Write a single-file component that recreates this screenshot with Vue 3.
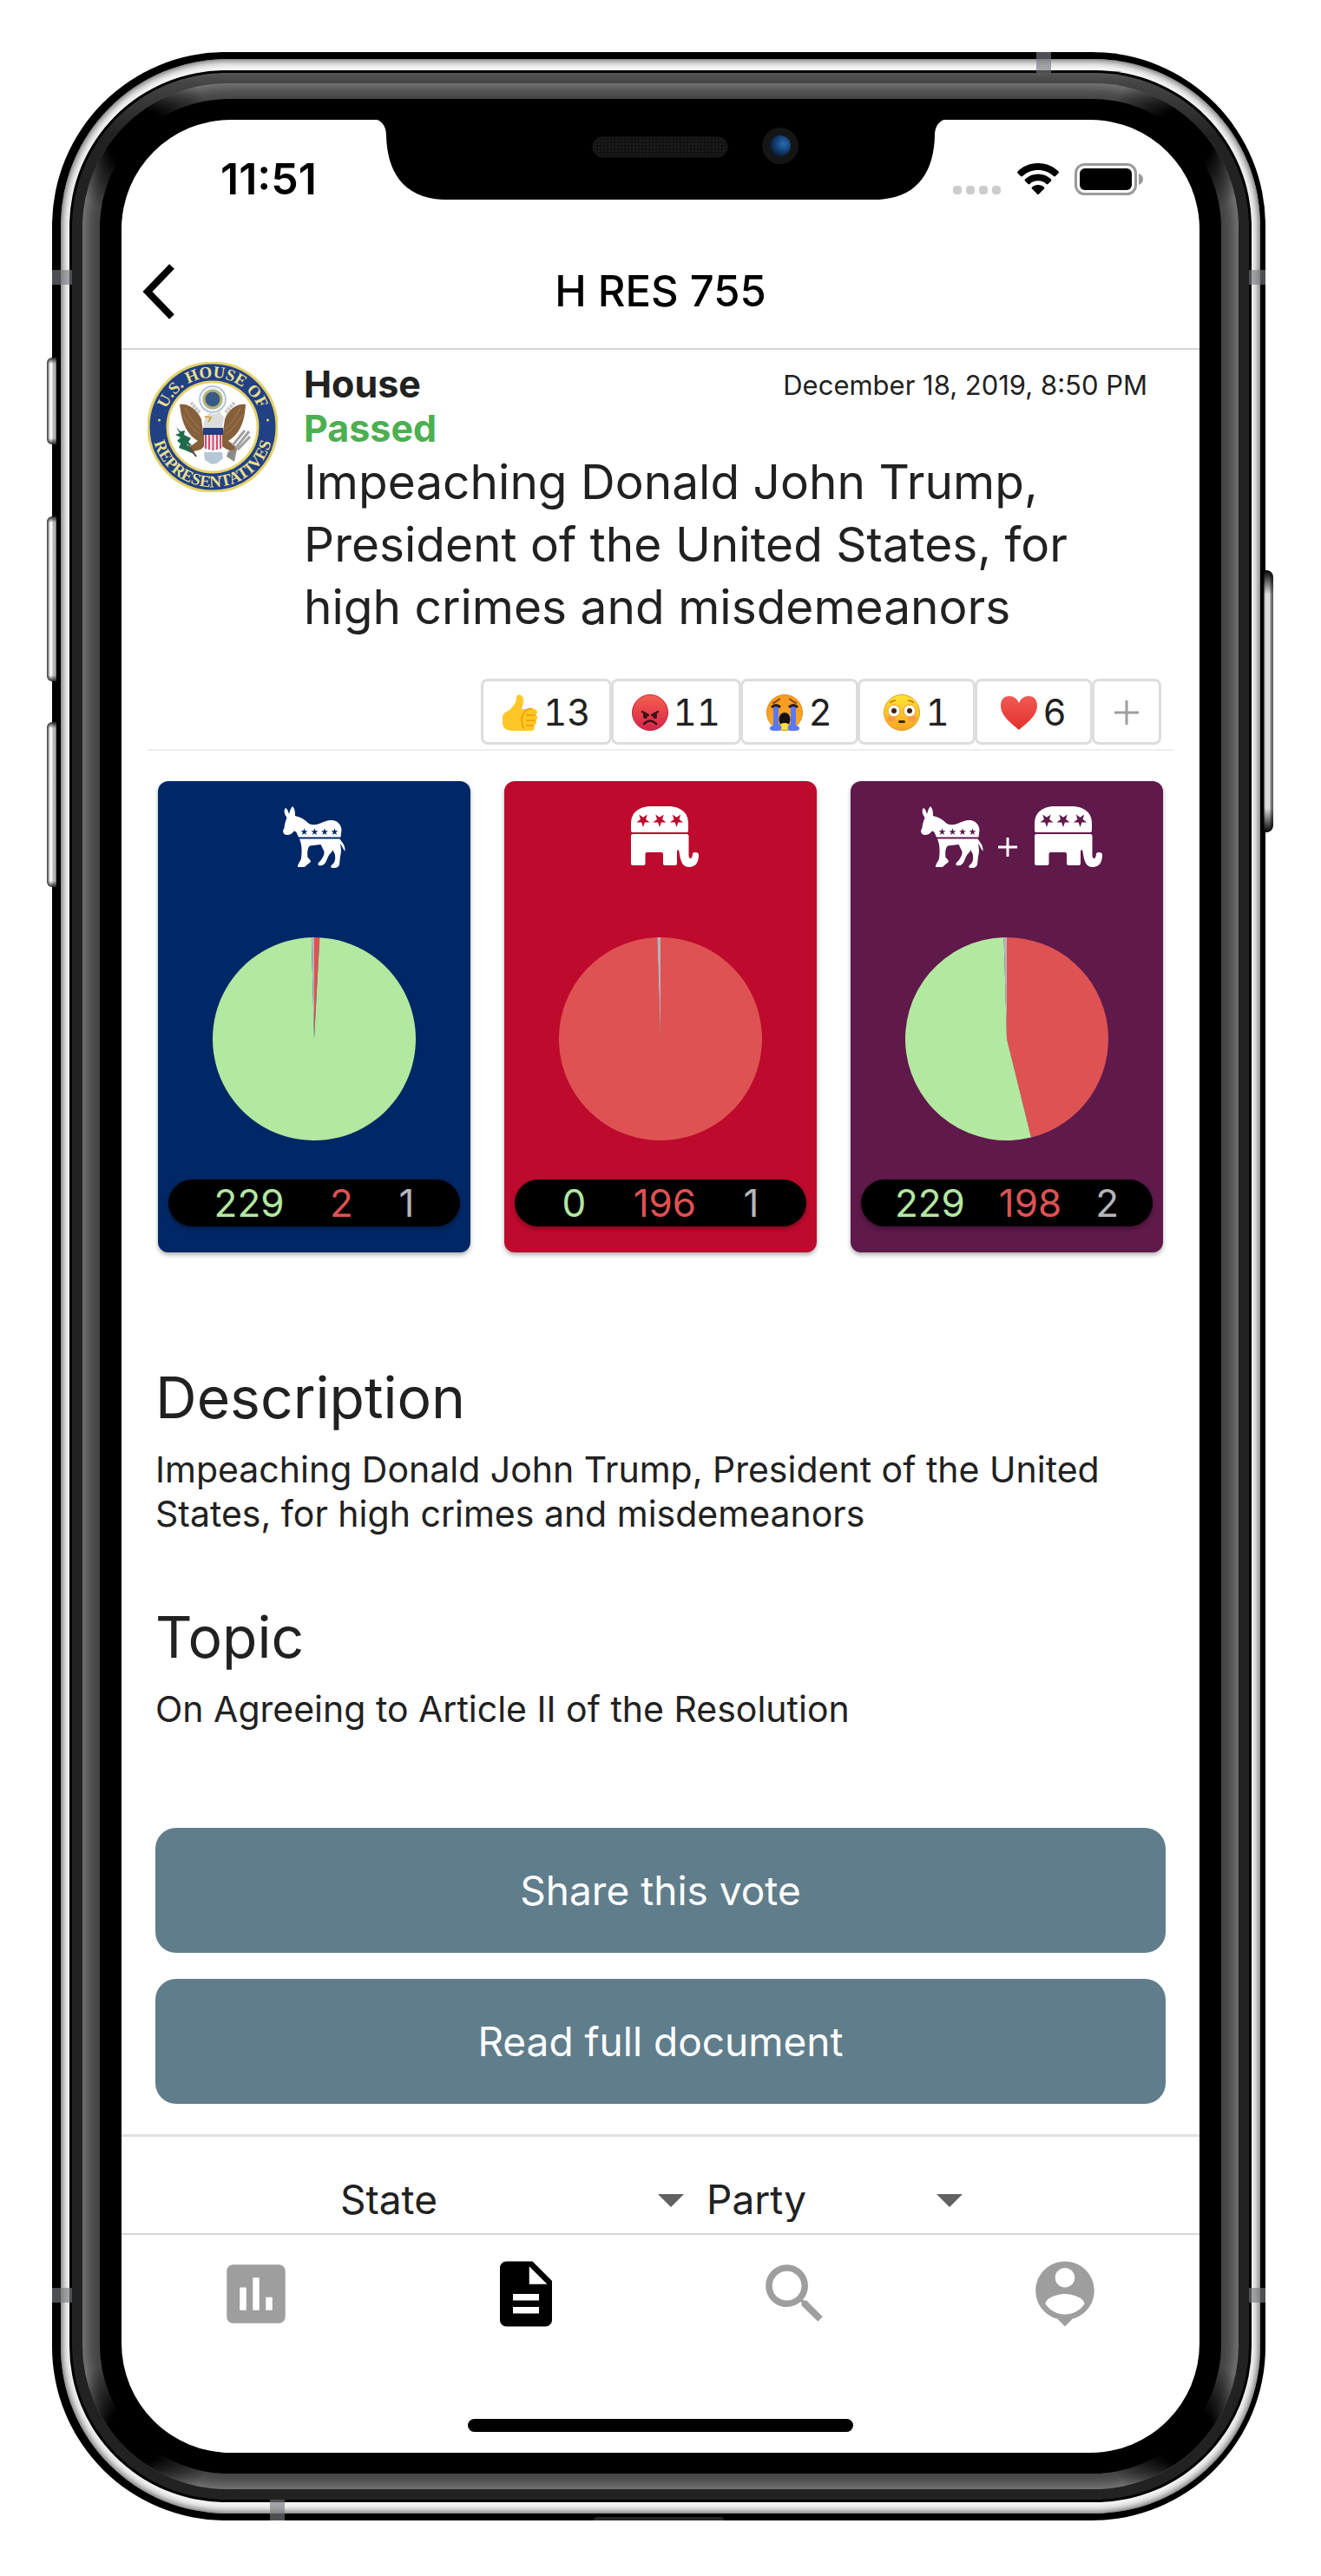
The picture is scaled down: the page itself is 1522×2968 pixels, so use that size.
<script setup>
const star = (cx, cy, r, flip = false) =>
  Array.from({ length: 10 }, (_, i) => {
    const angle = (Math.PI / 5) * i + (flip ? Math.PI / 2 : -Math.PI / 2)
    const len = i % 2 ? r * 0.4 : r
    return `${(cx + len * Math.cos(angle)).toFixed(2)},${(cy + len * Math.sin(angle)).toFixed(2)}`
  }).join(' ')

const donkeyStars = [24.5, 36.5, 48, 59.5].map((x) => star(x, 29.5, 4.2))
const elephantStars = [14, 33, 52.5].map((x) => star(x, 16, 8, true))

const reactions = [
  { kind: 'thumb', label: 'Like', count: 13 },
  { kind: 'angry', label: 'Angry', count: 11 },
  { kind: 'cry', label: 'Crying', count: 2 },
  { kind: 'flushed', label: 'Surprised', count: 1 },
  { kind: 'heart', label: 'Love', count: 6 },
]

const cards = [
  { tone: 'blue', label: 'Democrats', icons: ['donkey'], yes: 229, no: 2, other: 1 },
  { tone: 'red', label: 'Republicans', icons: ['elephant'], yes: 0, no: 196, other: 1 },
  { tone: 'purple', label: 'All members', icons: ['donkey', 'elephant'], yes: 229, no: 198, other: 2 },
]

// Clockwise from twelve o'clock: no, yes, other.
function slices({ no, yes, other }) {
  const total = no + yes + other
  let from = 0
  return [['no', no], ['yes', yes], ['other', other]]
    .filter(([, n]) => n > 0)
    .map(([name, n]) => {
      const to = from + n / total
      const point = (t) =>
        `${(50 + 50 * Math.sin(2 * Math.PI * t)).toFixed(3)} ${(50 - 50 * Math.cos(2 * Math.PI * t)).toFixed(3)}`
      const d = `M50 50L${point(from)}A50 50 0 ${n / total > 0.5 ? 1 : 0} 1 ${point(to)}Z`
      from = to
      return { name, d }
    })
}

const tabs = [
  { label: 'Stats', d: 'M17 17H15V13H17V17M13 17H11V7H13V17M9 17H7V10H9V17M19 3H5C3.89 3 3 3.89 3 5V19C3 20.1 3.9 21 5 21H19C20.1 21 21 20.1 21 19V5C21 3.9 20.1 3 19 3Z' },
  { label: 'Votes', active: true, d: 'M14 2H6c-1.1 0-2 .9-2 2v16c0 1.1.9 2 2 2h12c1.1 0 2-.9 2-2V8l-6-6zm2 16H8v-2h8v2zm0-4H8v-2h8v2zm-3-5V3.5L18.5 9H13z' },
  { label: 'Search', d: 'M15.5 14h-.79l-.28-.27C15.41 12.59 16 11.11 16 9.5 16 5.91 13.09 3 9.5 3S3 5.91 3 9.5 5.91 16 9.5 16c1.61 0 3.09-.59 4.23-1.57l.27.28v.79l5 4.99L20.49 19l-4.99-5zm-6 0C7.01 14 5 11.99 5 9.5S7.01 5 9.5 5 14 7.01 14 9.5 11.99 14 9.5 14z' },
  { label: 'Account', d: 'M12 2c-4.97 0-9 4.03-9 9 0 4.17 2.84 7.67 6.69 8.69L12 22l2.31-2.31C18.16 18.67 21 15.17 21 11c0-4.97-4.03-9-9-9zm0 2c1.66 0 3 1.34 3 3s-1.34 3-3 3-3-1.34-3-3 1.34-3 3-3zm0 14.3c-2.5 0-4.71-1.28-6-3.22.03-1.99 4-3.08 6-3.08 1.99 0 5.97 1.09 6 3.08-1.29 1.94-3.5 3.22-6 3.22z' },
]
</script>

<template>
  <div class="stage">
    <div class="phone">
      <i class="key key-mute"></i>
      <i class="key key-up"></i>
      <i class="key key-down"></i>
      <i class="key key-power"></i>
      <div class="steel">
        <div class="seam">
          <div class="bezel">
            <div class="glow">
              <div class="glass">
                <div class="screen">
                  <svg class="notch" viewBox="0 0 664 93" aria-hidden="true">
                    <defs>
                      <radialGradient id="lens" cx="0.65" cy="0.4" r="0.7">
                        <stop offset="0" stop-color="#2a6db0" />
                        <stop offset="0.45" stop-color="#17467f" />
                        <stop offset="1" stop-color="#081530" />
                      </radialGradient>
                      <pattern id="mesh" width="4" height="4" patternUnits="userSpaceOnUse">
                        <rect width="4" height="4" fill="#121212" />
                        <rect width="2" height="2" fill="#1e1e1e" />
                      </pattern>
                    </defs>
                    <path d="M0 0C9 0 16 7 16 19C17 60 35 93 86 93H578C629 93 647 60 648 19C648 7 655 0 664 0Z" />
                    <rect x="254" y="21" width="155" height="23" rx="11" fill="url(#mesh)" stroke="#1c1c1c" />
                    <circle cx="470" cy="31" r="21" fill="#151515" />
                    <circle cx="470" cy="31" r="12" fill="url(#lens)" />
                  </svg>

                  <div class="status">
                    <time class="clock">11:51</time>
                    <div class="signals">
                      <svg width="56" height="37" viewBox="0 0 56 37" aria-hidden="true">
                        <g fill="#ccc">
                          <rect v-for="n in 4" :key="n" :x="(n - 1) * 15" y="26" width="10" height="10" rx="4" />
                        </g>
                      </svg>
                      <svg width="48" height="37" viewBox="0 0 48 37" aria-hidden="true">
                        <path d="M24 0C34 0 42 4 47.500 9.500C48 10 48 11 47.500 11.500L44 15C43.500 15.500 42.500 15.500 42 15C37 10.500 31 8 24 8S11 10.500 6 15C5.500 15.500 4.500 15.500 4 15L.5 11.500C0 11 0 10 .5 9.500C6 4 14 0 24 0Z" />
                        <path d="M24 12.500C30 12.500 35 14.500 39 18.500C39.500 19 39.500 20 39 20.500L35.500 24C35 24.500 34 24.500 33.500 24C31 21.500 28 20.300 24 20.300S17 21.500 14.500 24C14 24.500 13 24.500 12.500 24L9 20.500C8.500 20 8.500 19 9 18.500C13 14.500 18 12.500 24 12.500Z" />
                        <path d="M24 25C27 25 29 26 31 27.700C31.500 28.200 31.500 29 31 29.500L24.800 35.800C24.300 36.300 23.700 36.300 23.200 35.800L17 29.500C16.500 29 16.500 28.200 17 27.700C19 26 21 25 24 25Z" />
                      </svg>
                      <svg width="80" height="37" viewBox="0 0 80 37" aria-hidden="true">
                        <rect x="1.500" y="1.500" width="69" height="34" rx="10" fill="none" stroke="#9a9a9a" stroke-width="3" />
                        <rect x="6" y="6" width="60" height="25" rx="6" />
                        <path d="M74 12C77 13 79 15 79 18.500S77 24 74 25Z" fill="#9a9a9a" />
                      </svg>
                    </div>
                  </div>

                  <header class="navbar">
                    <button class="back" type="button" aria-label="Back">
                      <svg width="38" height="64" viewBox="0 0 38 64" fill="none" stroke="#000" stroke-width="8">
                        <path d="M34 3L6 32L34 61" />
                      </svg>
                    </button>
                    <h1>H RES 755</h1>
                  </header>

                  <main>
                    <article class="bill">
                      <svg class="seal" viewBox="0 0 150 150" role="img" aria-label="Seal of the House">
                        <defs>
                          <path id="seal-top" d="M18 75A57 57 0 0 1 132 75" />
                          <path id="seal-bottom" d="M5.500 66A70 70 0 1 0 144.500 66" />
                        </defs>
                        <circle cx="75" cy="75" r="74" fill="#214184" stroke="#e5d36a" stroke-width="3" />
                        <circle cx="75" cy="75" r="52" fill="#fff" stroke="#e5d36a" stroke-width="3" />
                        <g class="seal-text">
                          <text><textPath href="#seal-top" startOffset="50%">U.S. HOUSE OF</textPath></text>
                          <text><textPath href="#seal-bottom" startOffset="50%">REPRESENTATIVES</textPath></text>
                        </g>
                        <circle cx="13.500" cy="67" r="1.500" fill="#e5d36a" />
                        <circle cx="138.500" cy="67" r="1.500" fill="#e5d36a" />
                        <circle cx="75" cy="43" r="15" fill="#eef3f6" stroke="#a9bdcb" stroke-width="1.500" />
                        <circle cx="75" cy="43" r="10" fill="#375a86" stroke="#b6b178" stroke-width="3" />
                        <path d="M50 47L60 58M100 47L90 58" stroke="#c5c5c5" stroke-width="4" stroke-dasharray="3 1" />
                        <path d="M37 49C46 47 57 54 62 66L64 80H87L89 66C93 54 104 47 113 49C112 66 108 82 93 91L104 99L101 105L90 100L84 96H67L61 101L50 104L47 99L58 91C43 82 39 66 37 49Z" fill="#86603b" />
                        <path d="M43 53C48 63 55 72 61 77M41 61C46 71 53 78 60 83M107 53C102 63 96 72 89 77M109 61C104 71 97 78 90 83" fill="none" stroke="#a07d58" stroke-width="1" />
                        <path d="M66 65L71 59L78 60L83 57L88 64L86 77H64Z" fill="#dcdcdc" />
                        <path d="M66 63L73 64L70 69" fill="none" stroke="#c8a942" stroke-width="2" />
                        <path d="M65 77H86V99Q75 105 65 99Z" fill="#f0e8ec" />
                        <path d="M67 84V100M71 84V101M75.500 84V102M80 84V101M84 84V100" stroke="#d9486d" stroke-width="2" />
                        <rect x="64" y="76" width="23" height="8" fill="#243c82" />
                        <path d="M33 75L38 80L43 79L42 84L50 88L47 92L52 97L45 95L53 106L44 102L36 99L38 94L34 91L38 87L32 84L37 82Z" fill="#1f6b4b" />
                        <path d="M47 96L56 109" stroke="#54483a" stroke-width="2" />
                        <path d="M101 100L117 80M98 96L112 79M104 101L118 86" stroke="#a0a0a0" stroke-width="3" />
                        <path d="M93 103L103 100L100 115L91 109Z" fill="#8c8c86" />
                        <path d="M65 104H86L87 111L80 117L74 118L66 113Z" fill="#b6c8d6" />
                      </svg>
                      <div class="bill-text">
                        <div class="bill-head">
                          <strong>House</strong>
                          <time class="date">December 18, 2019, 8:50 PM</time>
                        </div>
                        <strong class="passed">Passed</strong>
                        <h2>Impeaching Donald John Trump, President of the United States, for high crimes and misdemeanors</h2>
                      </div>
                    </article>

                    <div class="reactions">
                      <button v-for="r in reactions" :key="r.kind" class="reaction" type="button" :aria-label="r.label">
                        <svg class="emoji" viewBox="0 0 42 42" aria-hidden="true">
                          <defs>
                            <linearGradient :id="'fill-' + r.kind" x1="0" y1="0" x2="0" y2="1">
                              <stop class="stop-a" :class="r.kind" offset="0" />
                              <stop class="stop-b" :class="r.kind" offset="1" />
                            </linearGradient>
                          </defs>
                          <template v-if="r.kind === 'thumb'">
                            <path d="M1 27C1 21 5 21 9 18C13 14 17 10 17 4C17 0 20 0 22 1C27 4 25 11 23 17H36C42 17 42 22 39 24C42 25 42 29 39 30C41 32 40 35 37 36C39 38 38 42 34 42H13C4 42 1 38 1 32Z" fill="#ffc726" />
                            <path d="M39 24H28M39 30H28M37 36H28M26 40C22 34 22 26 26 21C28 17 32 16 36 17" fill="none" stroke="#ef9c00" stroke-width="1.500" />
                          </template>
                          <template v-else-if="r.kind === 'angry'">
                            <circle cx="21" cy="21" r="20.500" fill="url(#fill-angry)" stroke="#c9233f" />
                            <path d="M12 20L19 24M30 20L23 24" stroke="#3b1116" stroke-width="2.500" stroke-linecap="round" />
                            <ellipse cx="15.500" cy="24.500" rx="2.500" ry="3.500" fill="#3b1116" />
                            <ellipse cx="26.500" cy="24.500" rx="2.500" ry="3.500" fill="#3b1116" />
                            <path d="M14 34Q21 27 28 34" fill="none" stroke="#3b1116" stroke-width="2.500" stroke-linecap="round" />
                          </template>
                          <template v-else-if="r.kind === 'cry'">
                            <circle cx="21" cy="21" r="20.500" fill="url(#fill-cry)" stroke="#e58a10" />
                            <path d="M8 10Q12 8 15 5.500M34 10Q30 8 27 5.500" fill="none" stroke="#80481b" stroke-width="2" stroke-linecap="round" />
                            <ellipse cx="21" cy="29" rx="6.500" ry="8" fill="#171113" />
                            <ellipse cx="21" cy="37" rx="6" ry="4" fill="#ffe23a" />
                            <path d="M8 14H14V34C19 36 18 42 14 42H8C3 42 2 37 8 36ZM34 14H28V34C23 36 24 42 28 42H34C39 42 40 37 34 36Z" fill="#5b78fb" />
                            <path d="M6 15Q11 10 16 15M36 15Q31 10 26 15" fill="none" stroke="#2c1a18" stroke-width="3" />
                          </template>
                          <template v-else-if="r.kind === 'flushed'">
                            <circle cx="21" cy="21" r="20.500" fill="url(#fill-flushed)" stroke="#e79a16" />
                            <ellipse cx="9" cy="28" rx="5" ry="3.500" fill="#f78b4e" opacity=".7" />
                            <ellipse cx="33" cy="28" rx="5" ry="3.500" fill="#f78b4e" opacity=".7" />
                            <circle cx="12" cy="19" r="7" fill="#fff" stroke="#e79a16" />
                            <circle cx="30" cy="19" r="7" fill="#fff" stroke="#e79a16" />
                            <circle cx="12" cy="19" r="3" fill="#3b2414" />
                            <circle cx="30" cy="19" r="3" fill="#3b2414" />
                            <path d="M7 10Q10 7 14 7M35 10Q32 7 28 7" fill="none" stroke="#c77a10" stroke-width="1.500" />
                            <rect x="17" y="30" width="8" height="3" rx="1.500" fill="#3b2414" />
                          </template>
                          <path v-else d="M21 41C12 33 0 25 0 13C0 5 5 2 10 2C15 2 19 5 21 10C23 5 27 2 32 2C37 2 42 5 42 13C42 25 30 33 21 41Z" fill="url(#fill-heart)" />
                        </svg>
                        <span>{{ r.count }}</span>
                      </button>
                      <button class="reaction add" type="button" aria-label="Add reaction">
                        <svg width="28" height="28" viewBox="0 0 28 28" stroke="#9e9e9e" stroke-width="3">
                          <path d="M0 14H28M14 0V28" />
                        </svg>
                      </button>
                    </div>

                    <div class="cards">
                      <section v-for="card in cards" :key="card.tone" class="card" :class="card.tone" :aria-label="card.label">
                        <div class="party">
                          <template v-for="(icon, i) in card.icons" :key="icon">
                            <svg v-if="i" class="plus" width="22" height="22" viewBox="0 0 22 22" stroke="#fff" stroke-width="3">
                              <path d="M0 11H22M11 0V22" />
                            </svg>
                            <svg v-if="icon === 'donkey'" width="72" height="72" viewBox="0 0 72 72" fill="#fff">
                              <path d="M4.500 13C1 8 1 4 3 2C5.500 3 6 6 7 9C8 5 9 2 11 0C14 3 14 7 14 11C20 12 25 15 30 20C34 22 38 21.500 42 20C47 18 51 16 56 16C63 16.500 67 21 67.500 27L66.500 35.500H18L15.500 30Q13 27 11.500 30Q9 33.500 5 33Q0 33 0 28Q2 25 2 21Q3 17 4.500 13Z" />
                              <path d="M19 37.500H65.500C68 42 72 44 71.500 52C69 49 68 45 66 43C67 48 67.500 53 66 58L65 67Q64 71 59 71H56Q54 69 57 67Q61 64 60 56C59 52 56 50 56 46C58 50 57 52 55 54C51 57 51 64 47 67Q45 69 41 68Q39 66 43 63Q48 57 47.500 52C46 49 45 47 43.500 44L31 45.500C28 48 28 54 28.500 59C30 60 32 62 32 64L27 68Q26 70 24 70H17C17 66 20 64 21 60C22 52 22 45 19 37.500Z" />
                              <polygon v-for="(points, n) in donkeyStars" :key="n" class="cutout" :points="points" />
                            </svg>
                            <svg v-else width="78" height="70" viewBox="0 0 78 70" fill="#fff">
                              <path d="M0 28V20C0 7 9 0 24 0H42C57 0 66 7 66 20V28Q66 30 64 30H2Q0 30 0 28Z" />
                              <path d="M2 32H64Q66.500 32 66.500 34V56Q66.500 60 68.500 60Q70.500 60 71 55Q71 53 74 53Q78 53 78 56C78 65 74 70 67 70C59 70 57 63 55.500 52Q54 48 53 52V66Q53 68 51 68H39Q37 68 37 66V55Q37 53 35 53H18.500Q16.500 53 16.500 55V66Q16.500 68 14.500 68H2Q0 68 0 66V34Q0 32 2 32Z" />
                              <polygon v-for="(points, n) in elephantStars" :key="n" class="cutout" :points="points" />
                            </svg>
                          </template>
                        </div>
                        <svg class="pie" viewBox="0 0 100 100" aria-hidden="true">
                          <path v-for="s in slices(card)" :key="s.name" :class="'slice-' + s.name" :d="s.d" />
                        </svg>
                        <div class="tally">
                          <span class="yes">{{ card.yes }}</span>
                          <span class="no">{{ card.no }}</span>
                          <span class="other">{{ card.other }}</span>
                        </div>
                      </section>
                    </div>

                    <div class="details">
                      <section>
                        <h3>Description</h3>
                        <p>Impeaching Donald John Trump, President of the United States, for high crimes and misdemeanors</p>
                      </section>
                      <section>
                        <h3>Topic</h3>
                        <p>On Agreeing to Article II of the Resolution</p>
                      </section>
                      <div class="actions">
                        <button type="button">Share this vote</button>
                        <button type="button">Read full document</button>
                      </div>
                    </div>
                  </main>

                  <div class="filters">
                    <div class="filter filter-state">
                      <select aria-label="State"><option>State</option></select>
                      <svg width="30" height="15" viewBox="0 0 30 15" fill="#616161"><path d="M0 0H30L15 15Z" /></svg>
                    </div>
                    <div class="filter filter-party">
                      <select aria-label="Party"><option>Party</option></select>
                      <svg width="30" height="15" viewBox="0 0 30 15" fill="#616161"><path d="M0 0H30L15 15Z" /></svg>
                    </div>
                  </div>

                  <nav class="tabs">
                    <a v-for="tab in tabs" :key="tab.label" href="#" :class="{ active: tab.active }" :aria-label="tab.label">
                      <svg width="90" height="90" viewBox="0 0 24 24" fill="currentColor"><path :d="tab.d" /></svg>
                    </a>
                  </nav>
                  <div class="home"></div>
                </div>
              </div>
            </div>
          </div>
        </div>
      </div>
      <i class="band band-top"></i>
      <i class="band band-bottom"></i>
      <i class="band band-left upper"></i>
      <i class="band band-left lower"></i>
      <i class="band band-right upper"></i>
      <i class="band band-right lower"></i>
      <i class="port"></i>
    </div>
  </div>
</template>

<style>
body {
  margin: 0;
  background: #fff;
}
</style>

<style scoped>
* {
  box-sizing: border-box;
}

.stage {
  padding: 60px 64px 64px 60px;
  font-family: Inter, "Liberation Sans", sans-serif;
  color: #212121;
}

button,
select {
  font-family: inherit;
  color: inherit;
  margin: 0;
}

svg {
  display: block;
  flex: none;
}

/* Device body, ring by ring from the outside in */
.phone {
  position: relative;
  padding: 8px 6px 8px 10px;
  border-radius: 200px;
  background: #000;
}

.steel {
  padding: 13px 10px;
  border-radius: 192px;
  background: #f4f4f4;
  box-shadow: inset 0 0 10px 1px #444;
}

.seam {
  padding: 3px;
  border-radius: 180px;
  background: #000;
}

.bezel {
  padding: 12px;
  border-radius: 177px;
  background: linear-gradient(#555, #444 12px, #222 70px);
}

.glow {
  position: relative;
  padding: 18px 20px;
  border-radius: 166px;
  background: #444;
  box-shadow: inset 0 0 16px 4px #858585;
}

.glow::before {
  content: "";
  position: absolute;
  inset: 0;
  border-radius: inherit;
  background:
    radial-gradient(circle at 64px 64px, #000 34px, transparent 90px),
    radial-gradient(circle at calc(100% - 64px) 64px, #000 34px, transparent 90px),
    radial-gradient(circle at 64px calc(100% - 64px), #000 34px, transparent 90px),
    radial-gradient(circle at calc(100% - 64px) calc(100% - 64px), #000 34px, transparent 90px);
}

.glass {
  position: relative;
  padding: 24px 25px;
  border-radius: 148px;
  background: #000;
}

.screen {
  position: relative;
  overflow: hidden;
  border-radius: 126px;
  background: #fff;
}

.key {
  position: absolute;
  left: -6px;
  width: 11px;
  border-radius: 6px 0 0 6px;
  background:
    linear-gradient(#222, transparent 7px, transparent calc(100% - 7px), #222),
    linear-gradient(to right, #333, #999 2px, #fff 4px, #eee 6px, #bbb 7px, #aaa 10px, #555);
}

.key-mute {
  top: 352px;
  height: 100px;
}

.key-up {
  top: 535px;
  height: 190px;
}

.key-down {
  top: 772px;
  height: 190px;
}

.key-power {
  top: 597px;
  right: -9px;
  left: auto;
  height: 302px;
  border-radius: 0 8px 8px 0;
  background:
    linear-gradient(#000, transparent 28px, transparent calc(100% - 28px), #000),
    linear-gradient(to right, #444, #ddd 2px, #ddd 7px, #888 8px, #555);
}

.band {
  position: absolute;
  background: rgb(120 122 126 / 65%);
}

.band-top {
  top: 0;
  right: 247px;
  width: 17px;
  height: 24px;
}

.band-bottom {
  bottom: 0;
  left: 251px;
  width: 17px;
  height: 24px;
}

.band-left {
  left: 0;
  width: 23px;
  height: 17px;
}

.band-right {
  right: 0;
  width: 19px;
  height: 17px;
}

.upper {
  top: 251px;
}

.lower {
  bottom: 251px;
}

.port {
  position: absolute;
  bottom: 0;
  left: 50%;
  width: 150px;
  height: 4px;
  margin-left: -75px;
  border-radius: 6px 6px 0 0;
  background: #262626;
}

.notch {
  position: absolute;
  top: -1px;
  left: 50%;
  width: 664px;
  margin-left: -332px;
}

/* Status bar and header */
.status {
  display: flex;
  justify-content: space-between;
  align-items: center;
  padding: 44px 64px 40px 114px;
}

.clock {
  font-size: 50px;
  line-height: 48px;
  font-weight: 600;
  color: #000;
}

.signals {
  display: flex;
  gap: 18px;
}

.navbar {
  display: grid;
  grid-template-columns: 100px 1fr 100px;
  align-items: center;
  height: 133px;
  border-bottom: 2px solid #d6d6d6;
}

.back {
  width: 100px;
  padding: 0 0 0 24px;
  border: 0;
  background: none;
}

h1 {
  margin: 0;
  font-size: 49px;
  line-height: 60px;
  font-weight: 500;
  text-align: center;
  color: #000;
}

/* Bill summary */
main {
  padding: 14px 30px 35px;
}

.bill {
  display: flex;
  gap: 30px;
}

.seal {
  width: 150px;
  height: 150px;
}

.seal-text {
  font: bold 19px "Liberation Serif", serif;
  text-anchor: middle;
  fill: #eadf8e;
}

.bill-text {
  flex: 1;
  padding-right: 30px;
}

.bill-head {
  display: flex;
  justify-content: space-between;
  align-items: center;
}

strong {
  display: block;
  font-size: 43px;
  line-height: 51px;
  font-weight: 700;
}

.passed {
  color: #4caf50;
}

.date {
  padding-top: 2px;
  font-size: 31px;
  line-height: 40px;
}

h2 {
  margin: 0;
  font-size: 55px;
  line-height: 72px;
  font-weight: 400;
}

.reactions {
  display: flex;
  justify-content: flex-end;
  margin-top: 47px;
  padding: 0 14px 5px 0;
  border-bottom: 2px solid #eee;
}

.reaction {
  display: flex;
  align-items: center;
  justify-content: center;
  gap: 6px;
  min-width: 136px;
  height: 76px;
  padding: 2px 21px 0;
  border: 3px solid #ddd;
  border-radius: 8px;
  background: #fff;
  font-size: 42px;
  line-height: 48px;
  font-variant-numeric: tabular-nums;
}

.reaction + .reaction {
  margin-left: -1px;
}

.reaction.add {
  min-width: 80px;
}

.emoji {
  width: 42px;
  height: 42px;
}

.stop-a.angry { stop-color: #f4604f; }
.stop-b.angry { stop-color: #d62349; }
.stop-a.cry { stop-color: #f79a20; }
.stop-b.cry { stop-color: #fba928; }
.stop-a.flushed { stop-color: #ffe632; }
.stop-b.flushed { stop-color: #fba424; }
.stop-a.heart { stop-color: #f25a54; }
.stop-b.heart { stop-color: #e2302c; }

/* Vote cards */
.cards {
  display: grid;
  grid-template-columns: repeat(3, 1fr);
  gap: 39px;
  margin-top: 35px;
  padding: 0 12px;
}

.card {
  display: flex;
  flex-direction: column;
  align-items: center;
  padding: 29px 12px 30px;
  border-radius: 12px;
  background: var(--tone);
  box-shadow: 0 3px 5px rgb(0 0 0 / 30%);
}

.blue { --tone: #002766; }
.red { --tone: #be0a2c; }
.purple { --tone: #5f194b; }

.party {
  display: flex;
  height: 72px;
}

.red .party,
.purple .party {
  padding-left: 10px;
}

.plus {
  margin: 36px 20px 0 17px;
}

.cutout {
  fill: var(--tone);
}

.pie {
  width: 234px;
  height: 234px;
  margin-top: 79px;
}

.slice-yes { fill: #b3e8a0; }
.slice-no { fill: #de5253; }
.slice-other { fill: #b5b5ba; }

.tally {
  display: flex;
  justify-content: space-evenly;
  align-self: stretch;
  margin-top: 45px;
  border-radius: 27px;
  background: #000;
  box-shadow: 0 3px 5px rgb(0 0 0 / 30%);
  font-size: 44px;
  line-height: 54px;
}

.yes { color: #b3e8a0; }
.no { color: #de5253; }
.other { color: #b5b5ba; }

/* Details */
.details {
  padding: 125px 9px 0;
}

.details section + section {
  margin-top: 74px;
}

h3 {
  margin: 0 0 16px;
  font-size: 66px;
  line-height: 84px;
  font-weight: 400;
}

p {
  margin: 0;
  font-size: 41px;
  line-height: 51px;
}

.actions {
  display: grid;
  gap: 30px;
  margin-top: 111px;
}

.actions button {
  height: 144px;
  border: 0;
  border-radius: 24px;
  background: #607d8b;
  color: #fff;
  font-size: 46px;
}

/* Filters and tab bar */
.filters {
  display: flex;
  gap: 24px;
  height: 114px;
  padding: 46px 0 0 252px;
  border-top: 3px solid #e0e0e0;
}

.filter {
  position: relative;
  height: 52px;
}

.filter svg {
  position: absolute;
  top: 20px;
  right: 2px;
  pointer-events: none;
}

.filter-state {
  width: 398px;
}

.filter-party {
  width: 297px;
}

select {
  display: block;
  width: 100%;
  height: 52px;
  padding: 0;
  border: 0;
  appearance: none;
  background: none;
  font-size: 46px;
  line-height: 52px;
}

.tabs {
  display: grid;
  grid-template-columns: repeat(4, 1fr);
  justify-items: center;
  padding-top: 23px;
  border-top: 2px solid #d6d6d6;
}

.tabs a {
  color: #9e9e9e;
}

.tabs .active {
  color: #000;
}

.home {
  width: 444px;
  height: 15px;
  margin: 99px auto 24px;
  border-radius: 8px;
  background: #000;
}
</style>
